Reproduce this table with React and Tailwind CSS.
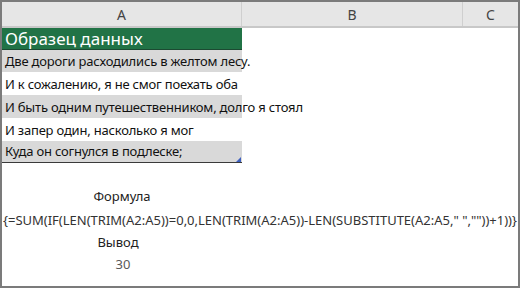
const font = { fontFamily: '"Noto Sans", "Open Sans", sans-serif' };

const rows = [
  { text: "Две дороги расходились в желтом лесу.", bg: "bg-[#d9d9d9]", h: "h-[22px]" },
  { text: "И к сожалению, я не смог поехать оба", bg: "bg-white", h: "h-[23px]" },
  { text: "И быть одним путешественником, долго я стоял", bg: "bg-[#d9d9d9]", h: "h-[23px]" },
  { text: "И запер один, насколько я мог", bg: "bg-white", h: "h-[23px]" },
  { text: "Куда он согнулся в подлеске;", bg: "bg-[#d9d9d9]", h: "h-[22px]", last: true },
];

export default function App() {
  return (
    <div
      className="w-[520px] h-[288px] border-2 border-[#7b7b7b] bg-white flex flex-col overflow-hidden"
      style={font}
    >
      {/* column headers */}
      <div className="flex h-[26px] shrink-0 bg-[#e6e6e6] border-b-2 border-[#c8c8c8] text-[14px] text-[#444]">
        <div className="w-[240px] flex items-center justify-center border-r border-[#cfcfcf]">A</div>
        <div className="w-[221px] flex items-center justify-center border-r border-[#cfcfcf]">B</div>
        <div className="flex-1 flex items-center justify-center">C</div>
      </div>

      {/* sample table */}
      <div className="w-[240px] flex flex-col">
        <div className="h-[22px] bg-[#217346] border-b border-[#1c4a32] flex items-end pl-[3px] text-white text-[17px] leading-[21px]">
          Образец данных
        </div>
        {rows.map((r) => (
          <div
            key={r.text}
            className={`${r.h} ${r.bg} relative flex items-end pl-[3px] pb-[1px] text-[13px] leading-[19px] tracking-[-0.2px] text-[#111] whitespace-nowrap ${r.last ? "border-b border-[#3a3a3a]" : ""}`}
          >
            <span className="relative z-10">{r.text}</span>
            {r.last && (
              <svg className="absolute right-[1px] bottom-0" width="5" height="5" viewBox="0 0 5 5">
                <polygon points="5,0 5,5 0,5" fill="#3c5fc0" />
              </svg>
            )}
          </div>
        ))}
      </div>

      <div className="h-[23px]" />

      {/* formula */}
      <div className="flex flex-col text-[13px] text-[#222]">
        <div className="h-[22px] w-[240px] flex items-center justify-center">Формула</div>
        <div className="h-[23px] flex items-center pl-[1px] pt-[3px] whitespace-nowrap text-[#333]">
          {'{=SUM(IF(LEN(TRIM(A2:A5))=0,0,LEN(TRIM(A2:A5))-LEN(SUBSTITUTE(A2:A5," ",""))+1))}'}
        </div>
        <div className="h-[23px] w-[232px] flex items-center justify-center">Вывод</div>
        <div className="h-[22px] w-[242px] flex items-center justify-center text-[#595959]">30</div>
      </div>
    </div>
  );
}
